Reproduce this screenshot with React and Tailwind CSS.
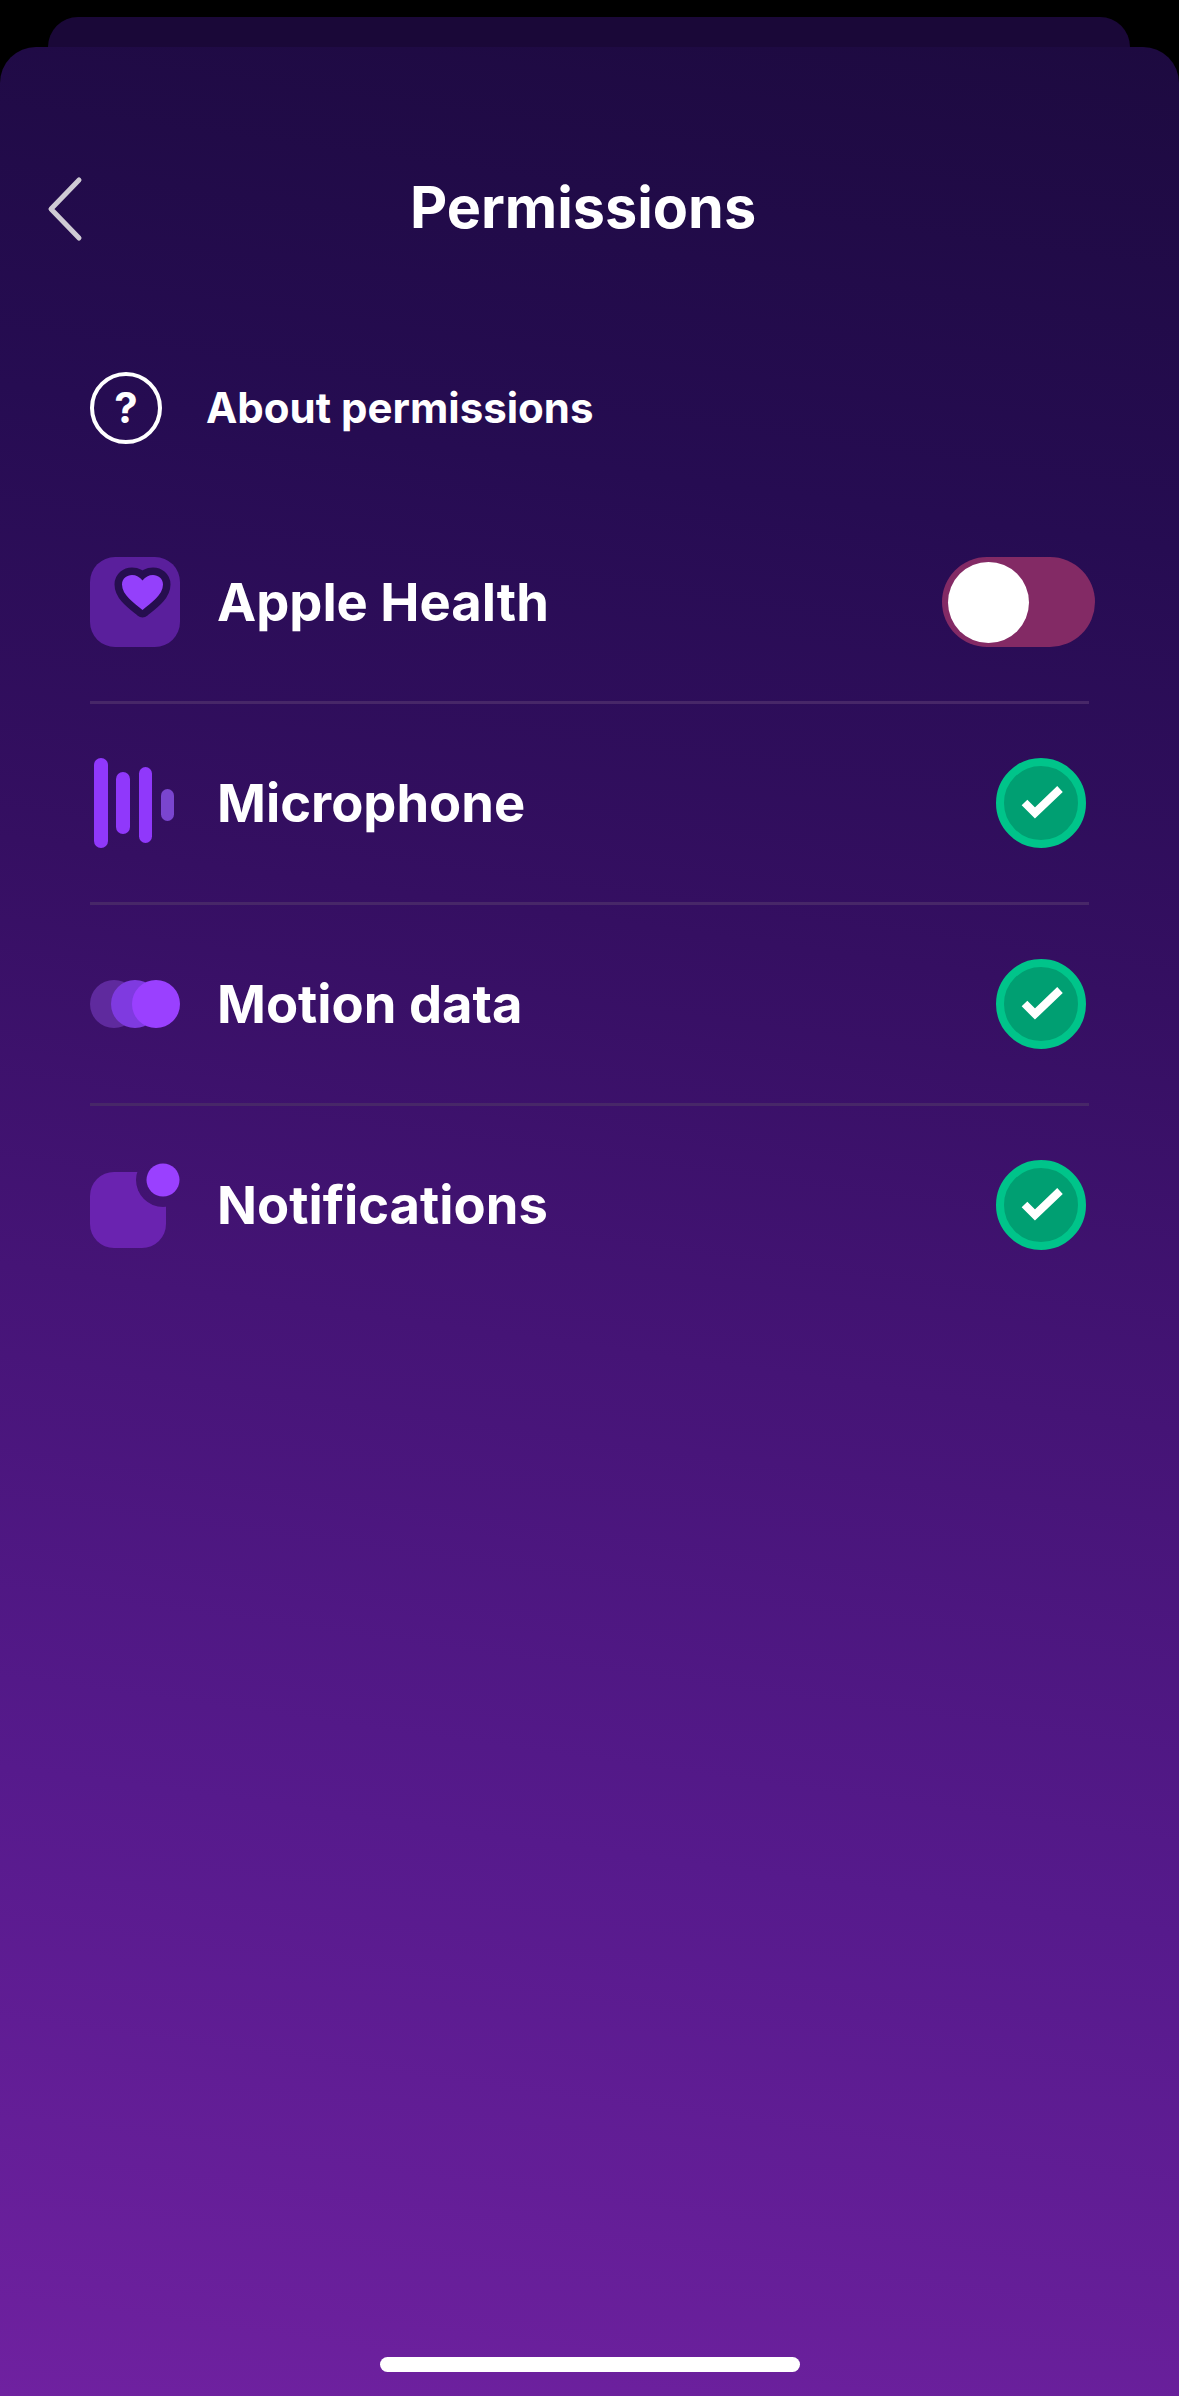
function HeartIcon() {
  return (
    <svg width="90" height="90" viewBox="0 0 90 90" className="block">
      <rect width="90" height="90" rx="25" fill="#5a1f9c" />
      <path
        d="M52.5 53 C44 46 32 38 32 27.5 C32 21.5 37 18 42 18 C46 18 50 20 52.5 23.5 C55 20 59 18 63 18 C68 18 73 21.5 73 27.5 C73 38 61 46 52.5 53 Z"
        fill="#9440fb"
        stroke="#260e4f"
        strokeWidth="15"
        strokeLinejoin="round"
        paintOrder="stroke"
      />
    </svg>
  );
}

function MicIcon() {
  return (
    <svg width="90" height="90" viewBox="0 0 90 90" className="block">
      <rect x="4" y="0" width="14" height="90" rx="7" fill="#9038fb" />
      <rect x="26" y="14" width="14" height="62" rx="7" fill="#9038fb" />
      <rect x="49" y="9" width="13" height="76" rx="6.5" fill="#9038fb" />
      <rect x="71" y="31" width="13" height="32" rx="6.5" fill="#7a45cf" />
    </svg>
  );
}

function MotionIcon() {
  return (
    <svg width="90" height="90" viewBox="0 0 90 90" className="block">
      <circle cx="24" cy="45" r="24" fill="#5f2a9e" />
      <circle cx="45" cy="45" r="24" fill="#7f3ae0" />
      <circle cx="66" cy="45" r="24" fill="#9a40ff" />
    </svg>
  );
}

function NotificationIcon() {
  return (
    <svg width="90" height="90" viewBox="0 0 90 90" className="block">
      <mask id="notif-cut">
        <rect width="90" height="90" fill="white" />
        <circle cx="73" cy="20" r="27" fill="black" />
      </mask>
      <rect x="0" y="12" width="76" height="76" rx="24" fill="#6a23b0" mask="url(#notif-cut)" />
      <circle cx="73" cy="20" r="16.5" fill="#9a40ff" />
    </svg>
  );
}

function CheckBadge() {
  return (
    <div className="w-[90px] h-[90px] rounded-full bg-[#009f72] border-[8px] border-[#00c48a] flex items-center justify-center">
      <svg width="44" height="34" viewBox="0 0 44 34" fill="none">
        <path d="M5.5 16.5 L16 27 L41 3" stroke="white" strokeWidth="8" />
      </svg>
    </div>
  );
}

function Toggle() {
  return (
    <div className="w-[153px] h-[90px] rounded-full bg-[#832a65] flex items-center pl-[6px] mr-[-9px]">
      <div className="w-[81px] h-[81px] rounded-full bg-white" />
    </div>
  );
}

function PermissionRow({ icon, label, action, divider = true }) {
  return (
    <div className={`h-[201px] flex items-center border-b-[3px] ${divider ? 'border-[#472768]' : 'border-transparent'}`}>
      <div className="w-[90px] h-[90px] shrink-0">{icon}</div>
      <span className="ml-[37px] flex-1 text-white text-[52.5px] font-bold leading-none">{label}</span>
      <div className="mr-[3px]">{action}</div>
    </div>
  );
}

export default function App() {
  return (
    <div className="relative w-[1179px] h-[2396px] bg-black overflow-hidden font-['Inter',sans-serif]">
      {/* card behind the sheet */}
      <div className="absolute left-[48px] right-[49px] top-[17px] h-[80px] rounded-t-[30px] bg-[#1a0838]" />

      {/* sheet */}
      <div className="absolute left-0 right-0 top-[47px] bottom-0 rounded-t-[36px] bg-[linear-gradient(188deg,#1d0a40_0%,#260c52_20%,#350f62_38%,#451476_55%,#561a8c_75%,#6f21a0_100%)]">
        <div className="h-[322px] flex items-center pl-[44px] pr-[97px]">
          <svg width="40" height="70" viewBox="0 0 40 70" fill="none" className="shrink-0">
            <path d="M35 7 L7 36 L35 65" stroke="#cfcbd4" strokeWidth="5" strokeLinecap="round" strokeLinejoin="round" />
          </svg>
          <h1 className="flex-1 text-center text-white text-[57.5px] font-bold leading-none">Permissions</h1>
        </div>

        <div className="flex items-center pl-[90px] mt-[3px] h-[72px]">
          <div className="w-[72px] h-[72px] rounded-full border-[4px] border-white flex items-center justify-center text-white text-[42px] font-bold leading-none">?</div>
          <span className="ml-[44px] text-white text-[42px] font-bold leading-none">About permissions</span>
        </div>

        <div className="ml-[90px] mr-[90px] mt-[59px]">
          <PermissionRow icon={<HeartIcon />} label="Apple Health" action={<Toggle />} />
          <PermissionRow icon={<MicIcon />} label="Microphone" action={<CheckBadge />} />
          <PermissionRow icon={<MotionIcon />} label="Motion data" action={<CheckBadge />} />
          <PermissionRow icon={<NotificationIcon />} label="Notifications" action={<CheckBadge />} divider={false} />
        </div>
      </div>

      {/* home indicator */}
      <div className="absolute left-[380px] top-[2357px] w-[420px] h-[15px] rounded-full bg-white" />
    </div>
  );
}
